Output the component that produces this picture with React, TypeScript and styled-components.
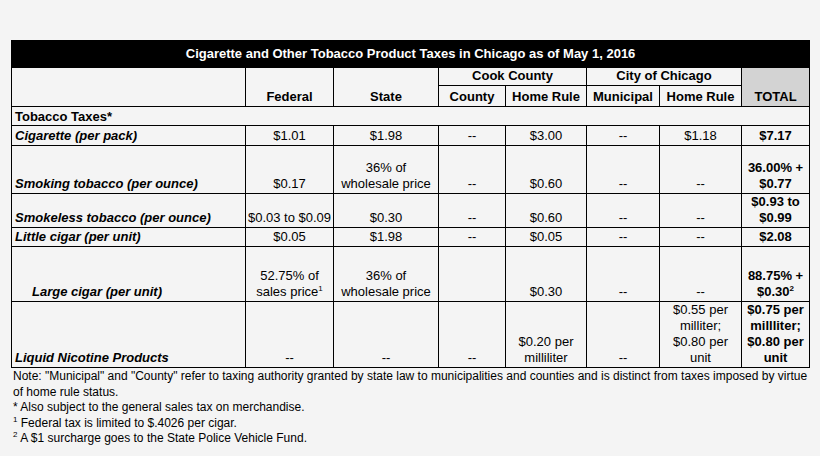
import React from "react"
import styled, { createGlobalStyle } from "styled-components"

const GlobalStyle = createGlobalStyle`
    html, body {
        margin: 0;
        padding: 0;
        background: #f4f4f4;
    }
    body {
        font-family: "Liberation Sans", Arial, sans-serif;
        color: #000;
    }
`

const Page = styled.div`
    width: 820px;
    height: 456px;
    padding: 40px 0 0 11px;
    box-sizing: border-box;
    overflow: hidden;
`

const TaxTable = styled.table`
    border-collapse: collapse;
    table-layout: fixed;
    width: 798px;
    font-size: 13px;
    line-height: 16px;
    border: 1.5px solid #000;
`

const TitleCell = styled.th`
    background: #000;
    color: #fff;
    font-weight: bold;
    text-align: center;
    padding: 0;
    vertical-align: middle;
`

const HeadCell = styled.th<{ $gray?: boolean }>`
    border: 1px solid #000;
    border-bottom-width: 1.5px;
    background: ${p => (p.$gray ? "#d3d3d3" : "transparent")};
    font-weight: bold;
    text-align: center;
    vertical-align: bottom;
    padding: 0 1px 1px;
    white-space: nowrap;
`

const SectionCell = styled.td`
    font-weight: bold;
    padding: 0 3px 0;
    vertical-align: bottom;
    border-bottom: 1.5px solid #000;
`

const LabelCell = styled.td<{ $indent?: boolean }>`
    font-weight: bold;
    font-style: italic;
    text-align: left;
    vertical-align: bottom;
    padding: 0 3px 1px ${p => (p.$indent ? "20px" : "3px")};
    border: 1px solid #000;
    border-bottom-width: 1.5px;
    white-space: nowrap;
`

const ValueCell = styled.td<{ $bold?: boolean }>`
    font-weight: ${p => (p.$bold ? "bold" : "normal")};
    text-align: center;
    vertical-align: bottom;
    padding: 0 1px 1px;
    border: 1px solid #000;
    border-bottom-width: 1.5px;
    white-space: nowrap;
`

const Row = styled.tr<{ $h: number }>`
    height: ${p => p.$h}px;
`

const Sup = styled.sup`
    font-size: 8px;
    line-height: 0;
    vertical-align: 5px;
`

const Notes = styled.div`
    width: 800px;
    font-size: 12px;
    line-height: 15.5px;
    padding: 1px 0 0 2px;
`

const NoteLine = styled.div`
    white-space: nowrap;
`

type Line = React.ReactNode

interface DataRow {
    label: string
    indent?: boolean
    height: number
    cells: Line[]
    total: Line
}

const rows: DataRow[] = [
    { label: "Cigarette (per pack)", height: 20, cells: ["$1.01", "$1.98", "--", "$3.00", "--", "$1.18"], total: "$7.17" },
    {
        label: "Smoking tobacco (per ounce)",
        height: 48,
        cells: ["$0.17", <>36% of<br />wholesale price</>, "--", "$0.60", "--", "--"],
        total: <>36.00% +<br />$0.77</>,
    },
    {
        label: "Smokeless tobacco (per ounce)",
        height: 34,
        cells: ["$0.03 to $0.09", "$0.30", "--", "$0.60", "--", "--"],
        total: <>$0.93 to<br />$0.99</>,
    },
    { label: "Little cigar (per unit)", height: 19, cells: ["$0.05", "$1.98", "--", "$0.05", "--", "--"], total: "$2.08" },
    {
        label: "Large cigar (per unit)",
        indent: true,
        height: 55,
        cells: [
            <>52.75% of<br />sales price<Sup>1</Sup></>,
            <>36% of<br />wholesale price</>,
            "",
            "$0.30",
            "--",
            "--",
        ],
        total: <>88.75% +<br />$0.30<Sup>2</Sup></>,
    },
    {
        label: "Liquid Nicotine Products",
        height: 66,
        cells: [
            "--",
            "--",
            "--",
            <>$0.20 per<br />milliliter</>,
            "--",
            <>$0.55 per<br />milliter;<br />$0.80 per<br />unit</>,
        ],
        total: <>$0.75 per<br />millliter;<br />$0.80 per<br />unit</>,
    },
]

const colWidths = [234, 88, 105, 67, 81, 73, 82, 68]

export default function App() {
    return (
        <Page>
            <GlobalStyle />
            <TaxTable>
                <colgroup>
                    {colWidths.map((w, i) => (
                        <col key={i} style={{ width: w }} />
                    ))}
                </colgroup>
                <thead>
                    <Row $h={27}>
                        <TitleCell colSpan={8}>Cigarette and Other Tobacco Product Taxes in Chicago as of May 1, 2016</TitleCell>
                    </Row>
                    <Row $h={18}>
                        <HeadCell rowSpan={2} />
                        <HeadCell rowSpan={2}>Federal</HeadCell>
                        <HeadCell rowSpan={2}>State</HeadCell>
                        <HeadCell colSpan={2}>Cook County</HeadCell>
                        <HeadCell colSpan={2}>City of Chicago</HeadCell>
                        <HeadCell rowSpan={2} $gray>TOTAL</HeadCell>
                    </Row>
                    <Row $h={21}>
                        <HeadCell>County</HeadCell>
                        <HeadCell>Home Rule</HeadCell>
                        <HeadCell>Municipal</HeadCell>
                        <HeadCell>Home Rule</HeadCell>
                    </Row>
                </thead>
                <tbody>
                    <Row $h={19}>
                        <SectionCell colSpan={8}>Tobacco Taxes*</SectionCell>
                    </Row>
                    {rows.map(r => (
                        <Row key={r.label} $h={r.height}>
                            <LabelCell $indent={r.indent}>{r.label}</LabelCell>
                            {r.cells.map((c, i) => (
                                <ValueCell key={i}>{c}</ValueCell>
                            ))}
                            <ValueCell $bold>{r.total}</ValueCell>
                        </Row>
                    ))}
                </tbody>
            </TaxTable>
            <Notes>
                <NoteLine>
                    Note: "Municipal" and "County" refer to taxing authority granted by state law to municipalities and counties and is distinct from taxes imposed by virtue
                </NoteLine>
                <NoteLine>of home rule status.</NoteLine>
                <NoteLine>* Also subject to the general sales tax on merchandise.</NoteLine>
                <NoteLine><Sup>1</Sup> Federal tax is limited to $.4026 per cigar.</NoteLine>
                <NoteLine><Sup>2</Sup> A $1 surcharge goes to the State Police Vehicle Fund.</NoteLine>
            </Notes>
        </Page>
    )
}
